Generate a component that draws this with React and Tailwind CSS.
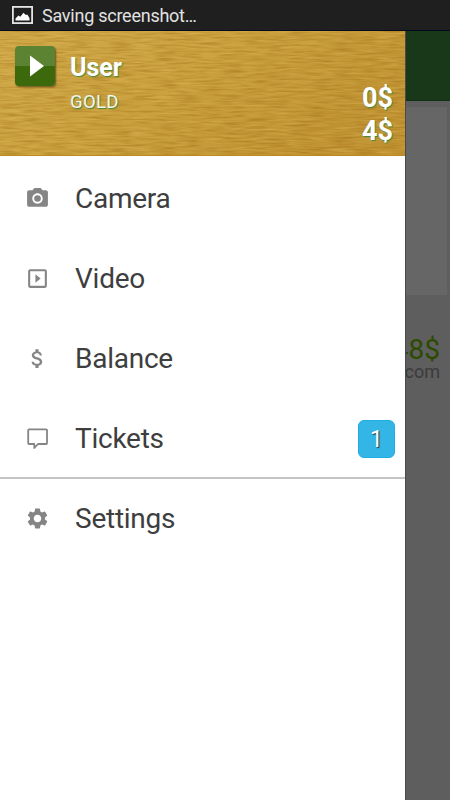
import React from "react";
import { MdCameraAlt, MdSlideshow, MdAttachMoney, MdSettings } from "react-icons/md";

function ChatIcon() {
  return (
    <svg width="25" height="25" viewBox="0 0 25 25" fill="none" stroke="currentColor" strokeWidth="1.8" strokeLinejoin="round">
      <path d="M4 3.4h17.2a.8.8 0 0 1 .8.8v13a.8.8 0 0 1-.8.8h-8.2l-3.7 4v-4H4a.8.8 0 0 1-.8-.8v-13a.8.8 0 0 1 .8-.8z" />
    </svg>
  );
}

function PictureIcon() {
  return (
    <svg width="21" height="18" viewBox="0 0 21 18" className="block">
      <rect x="0.9" y="0.9" width="19.2" height="16.2" fill="none" stroke="#e4e4e4" strokeWidth="1.8" />
      <path d="M3.5 14.5v-2l3-3 1.8 1.2 3.2-4 2.3 2.4 1.5-.6 2.2 3.4v2.6z" fill="#fff" />
    </svg>
  );
}

function BrushedGold() {
  return (
    <svg width="405" height="125" className="block">
      <defs>
        <linearGradient id="gold" x1="0" y1="0" x2="1" y2="0.45">
          <stop offset="0" stopColor="#d0aa49" />
          <stop offset="0.5" stopColor="#c9a03d" />
          <stop offset="1" stopColor="#bf9231" />
        </linearGradient>
        <filter id="grainDark" x="0" y="0" width="100%" height="100%" colorInterpolationFilters="sRGB">
          <feTurbulence type="fractalNoise" baseFrequency="0.045 0.5" numOctaves="2" seed="8" />
          <feColorMatrix values="0 0 0 0 0.62  0 0 0 0 0.42  0 0 0 0 0.08  2 0 0 0 -0.8" />
        </filter>
        <filter id="grainLight" x="0" y="0" width="100%" height="100%" colorInterpolationFilters="sRGB">
          <feTurbulence type="fractalNoise" baseFrequency="0.04 0.5" numOctaves="2" seed="21" />
          <feColorMatrix values="0 0 0 0 0.88  0 0 0 0 0.73  0 0 0 0 0.36  2 0 0 0 -0.75" />
        </filter>
      </defs>
      <rect width="405" height="125" fill="url(#gold)" />
      <rect width="405" height="125" filter="url(#grainLight)" opacity="0.45" />
      <rect width="405" height="125" filter="url(#grainDark)" opacity="0.5" />
      <rect width="405" height="1" y="124" fill="#bb8a18" />
    </svg>
  );
}

function Item({ icon, label, badge }) {
  return (
    <div className="flex h-20 items-center pl-[25px] pr-[10px] text-[#858585]">
      <div className="flex w-[25px] justify-center pb-[2px]">{icon}</div>
      <span className="ml-[25px] flex-1 text-[28px] leading-[34px] tracking-[-0.25px] text-[#3e3e3e]">{label}</span>
      {badge && (
        <span className="mb-px flex h-[38px] w-[37px] items-center justify-center rounded-[6px] border border-[#1fade3] bg-[#33b5e5] pt-[3px] text-[23px] text-white [text-shadow:1px_1px_1px_#234]">
          {badge}
        </span>
      )}
    </div>
  );
}

export default function App() {
  return (
    <div className="flex h-[800px] w-[450px] flex-col overflow-hidden bg-[#5e5e5e] font-['Roboto',sans-serif]">
      <div className="flex h-[31px] shrink-0 items-center border-b border-[#020b1e] bg-[#1f1f1f] pl-3">
        <PictureIcon />
        <span className="ml-[9px] pt-px text-[18px] leading-[30px] tracking-[-0.25px] text-[#e2e2e2]">Saving screenshot…</span>
      </div>
      <div className="flex min-h-0 flex-1">
        <aside className="w-[405px] shrink-0 bg-white">
          <header className="relative h-[125px] text-white">
            <div className="absolute inset-0"><BrushedGold /></div>
            <div className="relative flex h-full pl-[15px] pr-[12px] [text-shadow:1px_1px_1px_#3f8737]">
              <div className="mt-[15px] flex size-10 items-center justify-center rounded-[4px] bg-[linear-gradient(#5b8332_50%,#3d690d_50%)] shadow-[1px_1px_2px_#66521c]">
                <svg width="40" height="40" viewBox="0 0 40 40"><path d="M15 9.5v21L29 20z" fill="#fff" /></svg>
              </div>
              <div className="ml-[15px] flex-1 pt-[22px]">
                <div className="text-[25px] font-bold leading-[30px]">User</div>
                <div className="mt-[8px] text-[18.5px] leading-[22px] tracking-[0.3px] text-[#f4f4ee]">GOLD</div>
              </div>
              <div className="pt-[51px] text-right text-[27px] font-bold leading-[33px]">
                <div>0$</div>
                <div>4$</div>
              </div>
            </div>
          </header>
          <nav className="pt-[3px]">
            <Item icon={<MdCameraAlt size={25} />} label="Camera" />
            <Item icon={<MdSlideshow size={25} />} label="Video" />
            <Item icon={<MdAttachMoney size={25} />} label="Balance" />
            <Item icon={<ChatIcon />} label="Tickets" badge="1" />
            <div className="-mt-0.5 h-0.5 bg-[#c4c4c4]" />
            <Item icon={<MdSettings size={25} />} label="Settings" />
          </nav>
        </aside>
        <main className="flex min-w-0 flex-1 flex-col overflow-hidden border-l border-[#484b4b] bg-[#5e5e5e]">
          <div className="h-[70px] shrink-0 border-b border-[#123015] bg-[#183819]" />
          <div className="mr-[3px] mt-[6px] h-[188px] shrink-0 bg-[#666]" />
          <div className="mt-[42px] flex flex-col items-end pr-[10px]">
            <div className="text-[28px] leading-[26px] text-[#2c4b00]">48$</div>
            <div className="text-[18px] leading-[18px] text-[#3b3b3b]">.com</div>
          </div>
        </main>
      </div>
    </div>
  );
}
